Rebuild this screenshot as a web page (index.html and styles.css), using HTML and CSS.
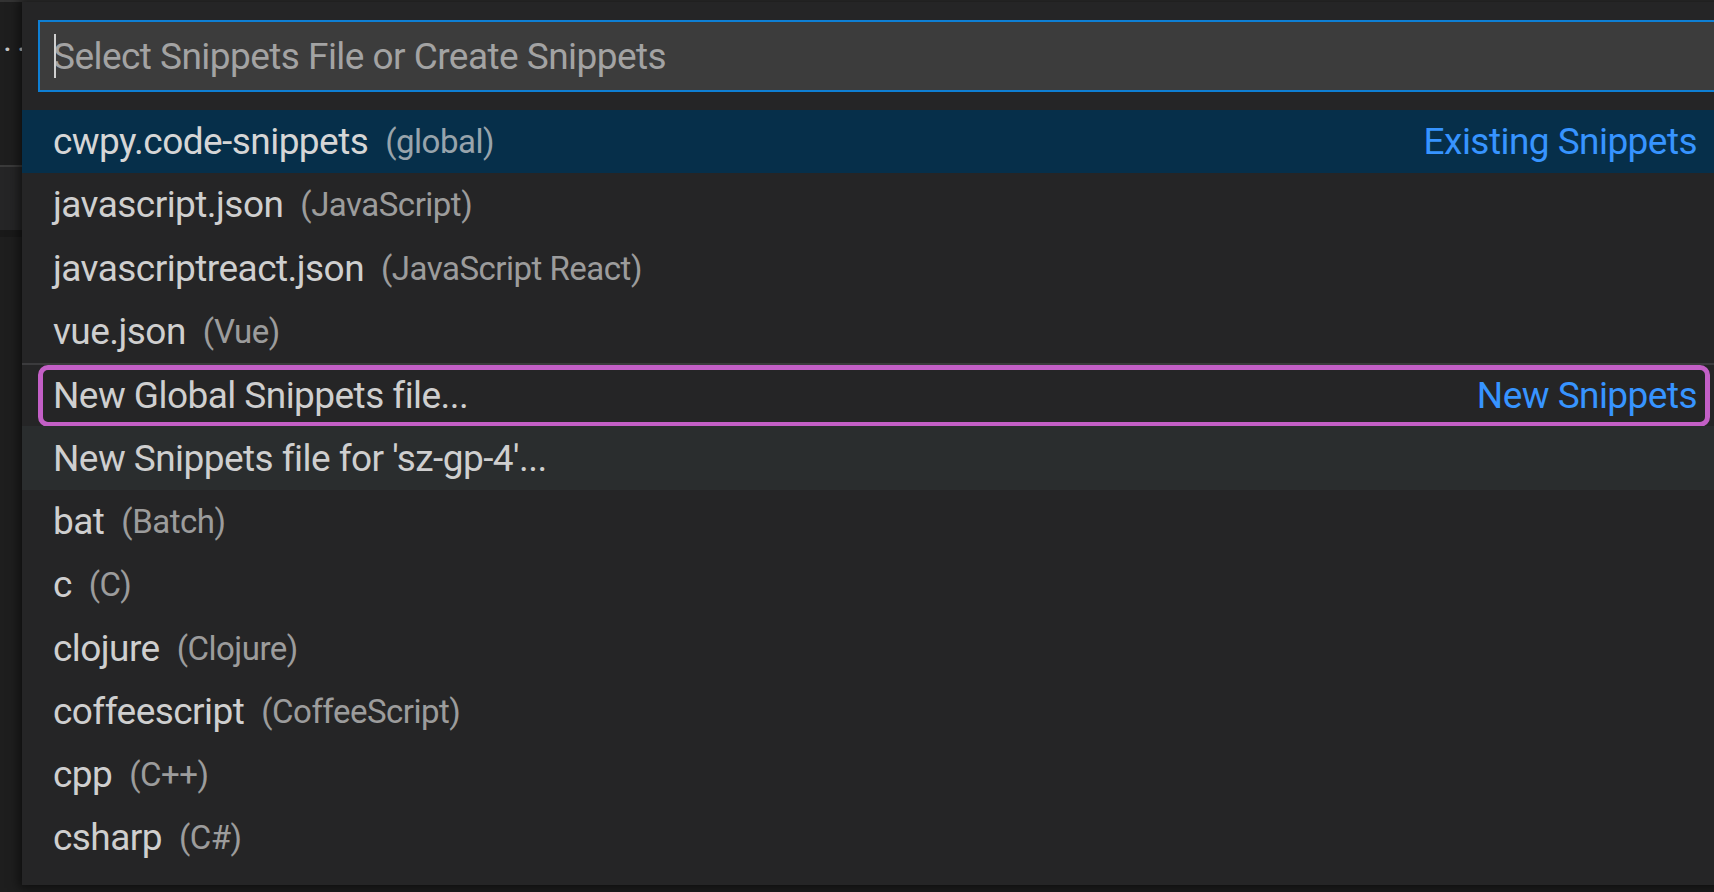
FILE: index.html
```html
<!DOCTYPE html>
<html>
<head>
<meta charset="utf-8">
<link rel="stylesheet" href="styles.css">
</head>
<body>
<div class="editor">
  <div class="titlebar"></div>
  <div class="breadcrumbs"><span class="dots">··</span></div>
  <div class="tab-top"></div>
  <div class="tabs"></div>
  <div class="tab-bottom"></div>
  <div class="code"></div>
</div>

<div class="quick-input">
  <div class="input-wrap">
    <div class="input"><span class="caret"></span><span class="placeholder">Select Snippets File or Create Snippets</span></div>
  </div>
  <div class="list">
    <div class="row selected"><span class="label">cwpy.code-snippets</span><span class="desc">(global)</span><span class="group">Existing Snippets</span></div>
    <div class="row"><span class="label">javascript.json</span><span class="desc">(JavaScript)</span></div>
    <div class="row"><span class="label">javascriptreact.json</span><span class="desc">(JavaScript React)</span></div>
    <div class="row"><span class="label">vue.json</span><span class="desc">(Vue)</span></div>
    <div class="row separator"><span class="label">New Global Snippets file...</span><span class="group">New Snippets</span><span class="highlight"></span></div>
    <div class="row hover"><span class="label">New Snippets file for 'sz-gp-4'...</span></div>
    <div class="row"><span class="label">bat</span><span class="desc">(Batch)</span></div>
    <div class="row"><span class="label">c</span><span class="desc">(C)</span></div>
    <div class="row"><span class="label">clojure</span><span class="desc">(Clojure)</span></div>
    <div class="row"><span class="label">coffeescript</span><span class="desc">(CoffeeScript)</span></div>
    <div class="row"><span class="label">cpp</span><span class="desc">(C++)</span></div>
    <div class="row"><span class="label">csharp</span><span class="desc">(C#)</span></div>
  </div>
</div>
</body>
</html>
```

FILE: styles.css
```css
html, body {
  margin: 0;
  padding: 0;
  width: 1714px;
  height: 892px;
  overflow: hidden;
  background: #1e1e1e;
  font-family: Roboto, "Liberation Sans", sans-serif;
}

.editor {
  display: flex;
  flex-direction: column;
  height: 892px;
}

.titlebar {
  height: 2px;
  background: #333333;
}

.breadcrumbs {
  height: 163px;
  background: #1e1e1e;
  padding-left: 3px;
  box-sizing: border-box;
  padding-top: 32px;
}

.dots {
  color: #c5c5c5;
  font-size: 34px;
  letter-spacing: 5px;
  line-height: 30px;
}

.tab-top {
  height: 2px;
  background: #3a3a3a;
}

.tabs {
  height: 63px;
  background: #252526;
}

.tab-bottom {
  height: 7px;
  background: #191919;
}

.code {
  flex: 1;
  background: #1e1e1e;
}

.quick-input {
  position: absolute;
  left: 22px;
  top: 2px;
  width: 1720px;
  height: 883px;
  background: #252526;
  box-shadow: 0 0 10px 3px rgba(0, 0, 0, 0.55);
  display: flex;
  flex-direction: column;
}

.input-wrap {
  padding: 18px 16px 18px 16px;
}

.input {
  height: 72px;
  box-sizing: border-box;
  border: 2px solid #0e7fd4;
  background: #3c3c3c;
  display: flex;
  align-items: center;
  padding-left: 13px;
  position: relative;
}

.caret {
  position: absolute;
  left: 14px;
  top: 12px;
  width: 2px;
  height: 44px;
  background: #d0d0d0;
}

.placeholder {
  color: #a3a3a3;
  font-size: 37px;
  letter-spacing: -0.55px;
}

.list {
  display: flex;
  flex-direction: column;
}

.row {
  height: 63.3px;
  box-sizing: border-box;
  display: flex;
  align-items: center;
  padding: 0 45px 0 31px;
  position: relative;
  color: #cfcfcf;
  font-size: 37px;
  letter-spacing: -0.55px;
  white-space: nowrap;
}

.row.selected {
  background: #062f4a;
  color: #d6d6d6;
}

.row.hover {
  background: #2a2d2e;
}

.row.separator {
  border-top: 2px solid #3b3b3d;
}

.desc {
  font-size: 33px;
  opacity: 0.7;
  margin-left: 17px;
  letter-spacing: -0.5px;
}

.group {
  margin-left: auto;
  color: #3794ff;
}

.highlight {
  position: absolute;
  left: 16px;
  top: 0;
  width: 1672px;
  height: 62px;
  box-sizing: border-box;
  border: 5px solid #c35fc6;
  border-radius: 10px;
}
```
